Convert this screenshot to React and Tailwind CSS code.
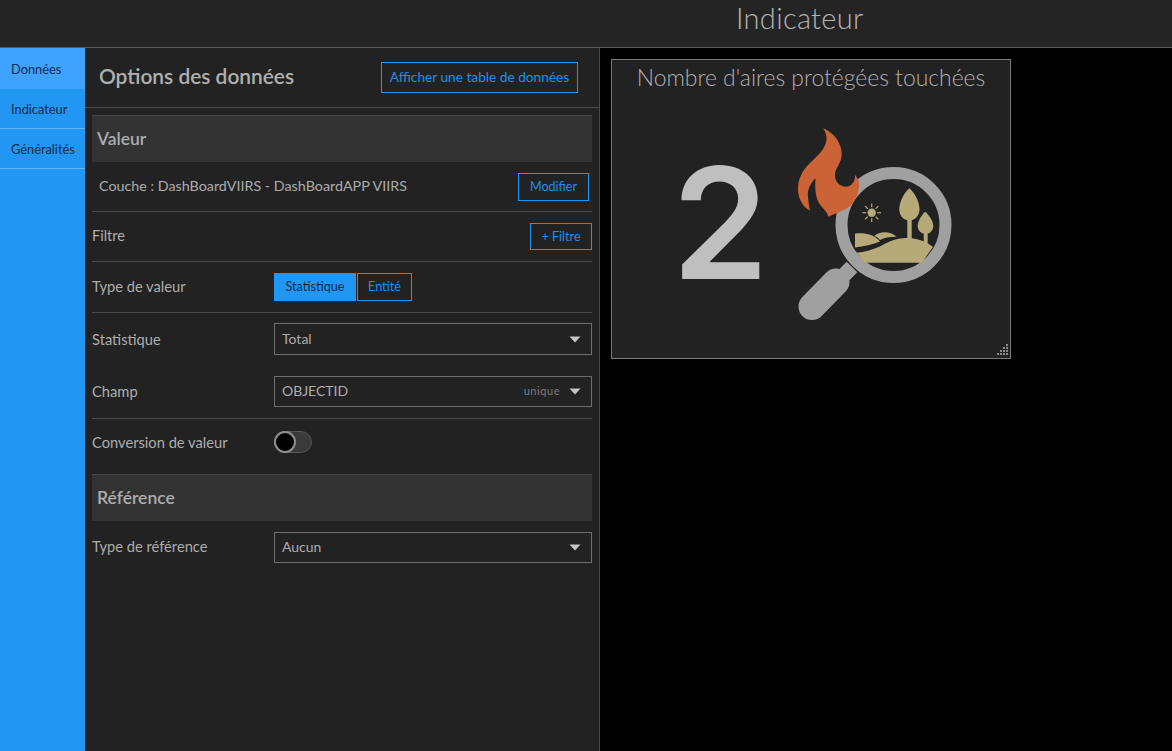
const font = { fontFamily: 'Lato, "Open Sans", sans-serif' }

function Arrow() {
  return (
    <svg width="12" height="7" viewBox="0 0 12 7" className="shrink-0">
      <path d="M0.5 0.5h11L6 6.5z" fill="#c4c4c4" />
    </svg>
  )
}

function Select({ value, hint, height }) {
  return (
    <div className={`flex ${height} w-[318px] items-center border border-[#6e6e6e] pl-[7px] pr-[10px] text-[14px] text-[#adadad]`}>
      <span className="mb-[2px] flex-1">{value}</span>
      {hint && <span className="mr-[9px] text-[11px] tracking-wider text-[#7d7d7d]">{hint}</span>}
      <Arrow />
    </div>
  )
}

function SectionTitle({ children, className }) {
  return (
    <div className={`flex h-[47px] items-center border-t border-[#454545] bg-[#333333] pl-[5px] text-[17.5px] font-semibold text-[#adadad] ${className}`}>
      {children}
    </div>
  )
}

function Row({ label, height, border = true, labelClass = '', children }) {
  return (
    <div className={`flex ${height} items-center ${border ? 'border-b border-[#4a4a4a]' : ''}`}>
      <span className={`w-[182px] shrink-0 text-[14.7px] text-[#adadad] ${labelClass}`}>{label}</span>
      {children}
    </div>
  )
}

function Illustration() {
  const rays = [0, 45, 90, 135, 180, 225, 270, 315]
  return (
    <svg width="160" height="195" viewBox="795 126 160 195" className="shrink-0">
      <path d="M852 267L837 282" stroke="#a0a0a0" strokeWidth="15" />
      <path d="M836 282L812 306.5" stroke="#a0a0a0" strokeWidth="27" strokeLinecap="round" />
      <circle cx="893.5" cy="225" r="52" fill="none" stroke="#a0a0a0" strokeWidth="12" />
      <g fill="#b5aa78">
        <path d="M856.7 252.7C864 252 872 250 880 246.5C888 242 896 238 906 238C916 238 926 241 933 247L921.7 262.7H865Z" />
        <path d="M855 233.5C864 232.5 873 233.5 880 241.5C873 244.5 864 246.5 855 247.5Z" />
        <path d="M874.3 236C880 231 890 231 896.7 236.7C890 236.5 885 237.5 880 240C878.5 238 876.5 236.8 874.3 236Z" />
        <path d="M909.3 188.3C915 193 919.5 202 919.5 209C919.5 215.5 915.5 219.5 911.7 220V240H907.3V220C903 219.5 899.3 215.5 899.3 209C899.3 202 904 193 909.3 188.3Z" />
        <path d="M925.2 211.7C929 215 933.3 221 933.3 226C933.3 230 930.5 233 927.7 233.5V244H923.7V233.5C920.5 233 917.7 230 917.7 226C917.7 221 921.5 215 925.2 211.7Z" />
      </g>
      <circle cx="871.7" cy="212.7" r="4.2" fill="#b5aa78" />
      {rays.map((a) => (
        <path
          key={a}
          d="M877.2 212.7H881"
          stroke="#b5aa78"
          strokeWidth="1.2"
          transform={`rotate(${a} 871.7 212.7)`}
        />
      ))}
      <path
        d="M823.3 128.3C834 133 842 143 841.7 155C841.5 163 835 168 835 175C835 182 840 187 846.7 186.7C852 186 855.5 181 855 175C858 178 859.5 182 859 187C858 197 853 205 846 209C840 212 834 214 828.3 216.7C827 211 822 208 819 203C815.5 197 814.5 187 815.7 178.3C810.5 183 807 190 808 197C808.5 202 809 206 810 210.7C803 207 798.3 199 798 190C797.8 180 801 172 810 163C817 156 825 150 826.5 140C827 136 825.5 132 823.3 128.3Z"
        fill="#cc6337"
      />
    </svg>
  )
}

function ResizeGrip() {
  const dots = [
    [9, 0],
    [6, 3], [9, 3],
    [3, 6], [6, 6], [9, 6],
    [0, 9], [3, 9], [6, 9], [9, 9],
  ]
  return (
    <svg width="11" height="11" viewBox="0 0 11 11" className="absolute bottom-[3px] right-[2px]">
      {dots.map(([x, y]) => (
        <rect key={`${x}-${y}`} x={x} y={y} width="2" height="2" fill="#8a8a8a" />
      ))}
    </svg>
  )
}

export default function App() {
  return (
    <div className="flex h-[751px] w-full flex-col overflow-hidden bg-black" style={font}>
      <header className="flex h-[48px] shrink-0 items-center border-b border-[#5a5a5a] bg-[#242424] pb-[13px]">
        <h1 className="ml-[736px] text-[29px] font-light leading-none tracking-[0.3px] text-[#b4b4b4]">Indicateur</h1>
      </header>

      <div className="flex flex-1">
        <nav className="w-[85px] shrink-0 bg-[#2196f3] text-[12.8px] text-[#0b2c4d]">
          <div className="flex h-[41px] items-center bg-[#40a2ff] pl-[11px] pt-[2px]">Données</div>
          <div className="flex h-[40px] items-center border-b border-[#5fb3f7] pl-[11px] pt-[2px]">Indicateur</div>
          <div className="flex h-[40px] items-center border-b border-[#5fb3f7] pl-[11px] pt-[2px]">Généralités</div>
        </nav>

        <section className="w-[515px] shrink-0 border-r border-[#4a4a4a] bg-[#222222]">
          <div className="flex h-[60px] items-center justify-between border-b border-[#4a4a4a] pl-[14px] pr-[21px]">
            <h2 className="mb-[4px] text-[20.9px] font-semibold text-[#b0b0b0]">Options des données</h2>
            <button className="h-[31px] w-[197px] border border-[#2196f3] text-[13.7px] text-[#1f8fe8]">
              Afficher une table de données
            </button>
          </div>

          <div className="px-[7px] pt-[7px]">
            <SectionTitle>Valeur</SectionTitle>

            <div className="flex h-[50px] items-center justify-between border-b border-[#4a4a4a] pl-[7px] pr-[3px]">
              <span className="mb-[2px] text-[14.3px] text-[#adadad]">Couche : DashBoardVIIRS - DashBoardAPP VIIRS</span>
              <button className="h-[28px] w-[71px] border border-[#2196f3] pt-[2px] text-[12.6px] text-[#1f8fe8]">Modifier</button>
            </div>

            <div className="flex h-[50px] items-center justify-between border-b border-[#4a4a4a]">
              <span className="mb-[2px] text-[14.5px] text-[#adadad]">Filtre</span>
              <button className="h-[27px] w-[62px] border border-[#2196f3] pt-[2px] text-[12.6px] text-[#1f8fe8]">+ Filtre</button>
            </div>

            <Row label="Type de valeur" height="h-[51px]" labelClass="mb-[2px]">
              <button className="h-[28px] w-[82px] bg-[#2196f3] pt-[1px] text-[12.6px] text-[#0b2c4d]">Statistique</button>
              <button className="ml-px h-[28px] w-[55px] border border-[#2196f3] pt-[1px] text-[12.6px] text-[#1f8fe8]">Entité</button>
            </Row>

            <Row label="Statistique" height="h-[53px] pb-[1px]" border={false}>
              <Select value="Total" height="h-[32px]" />
            </Row>

            <Row label="Champ" height="h-[53px] pb-[1px]">
              <Select value="OBJECTID" hint="unique" height="h-[31px]" />
            </Row>

            <Row label="Conversion de valeur" height="h-[46px]" border={false}>
              <div className="mb-[1px] flex h-[22px] w-[38px] items-center rounded-full border border-[#555555] bg-[#3a3a3a]">
                <div className="-ml-px h-[22px] w-[22px] rounded-full border-2 border-[#8f8f8f] bg-black" />
              </div>
            </Row>

            <SectionTitle className="mt-[9px]">Référence</SectionTitle>

            <Row label="Type de référence" height="h-[53px]" border={false} labelClass="mb-[2px]">
              <Select value="Aucun" height="h-[31px]" />
            </Row>
          </div>
        </section>

        <main className="flex-1 bg-black pl-[11px] pt-[11px]">
          <div className="relative flex h-[300px] w-[400px] flex-col border border-[#7a7a7a] bg-[#222222]">
            <div className="pt-[3px] text-center text-[22.9px] font-light leading-[28px] text-[#b0b0b0]">
              Nombre d'aires protégées touchées
            </div>
            <div className="flex items-start pl-[60px] pt-[35px]">
              <span className="mt-[19px] w-[123px] text-[155px] font-semibold leading-[155px] text-[#bfbfbf]" style={{ fontFamily: 'Inter, sans-serif' }}>
                2
              </span>
              <Illustration />
            </div>
            <ResizeGrip />
          </div>
        </main>
      </div>
    </div>
  )
}
